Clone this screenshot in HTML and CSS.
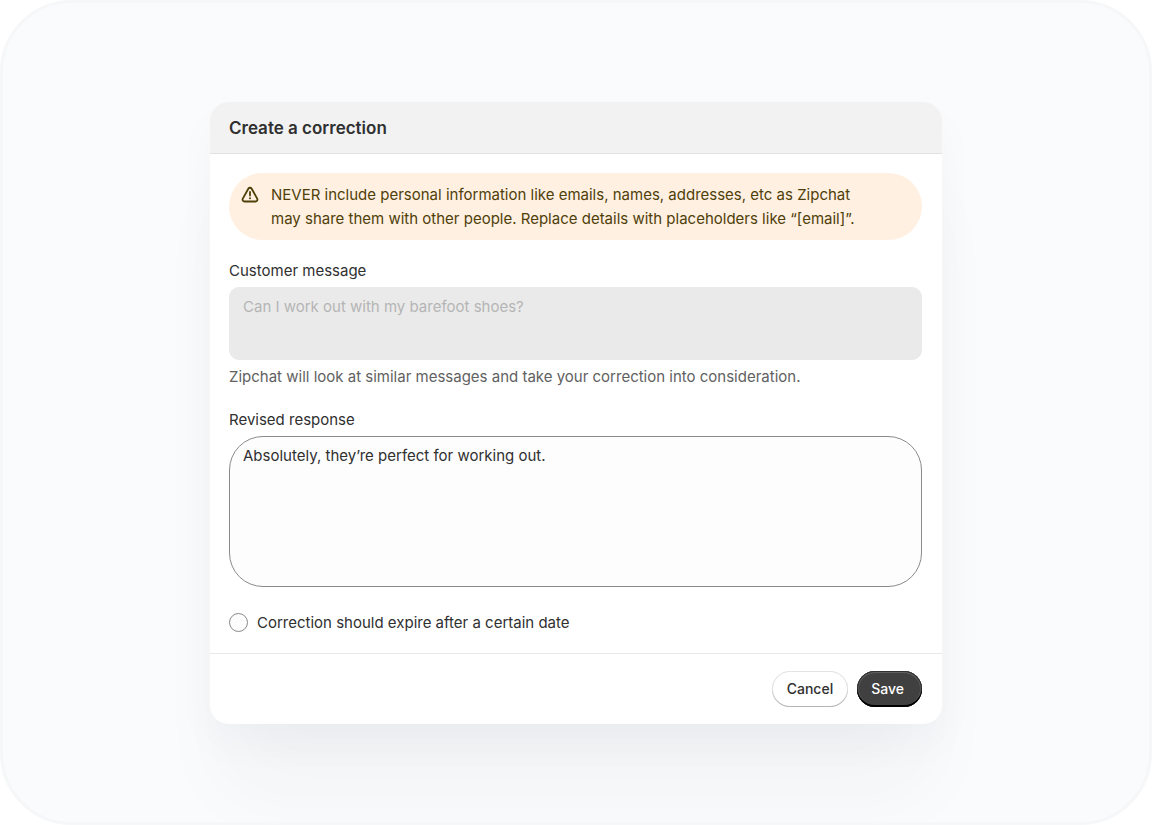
FILE: index.html
```html
<!DOCTYPE html>
<html lang="en">
<head>
    <meta charset="UTF-8">
    <meta name="viewport" content="width=device-width, initial-scale=1.0">
    <title>Create a correction</title>
    <link rel="stylesheet" href="styles.css">
</head>
<body>
    <main class="stage">
        <form class="modal">
            <header class="modal-header">
                <h2>Create a correction</h2>
            </header>
            <div class="modal-body">
                <div class="alert" role="alert">
                    <svg class="alert-icon" viewBox="0 0 18 18" fill="none" stroke="currentColor" stroke-width="1.8" stroke-linecap="round" stroke-linejoin="round" aria-hidden="true">
                        <path d="M7.3 2.7 1.8 12.6c-.7 1.3.2 2.9 1.7 2.9h11c1.5 0 2.4-1.6 1.7-2.9L10.7 2.7c-.8-1.3-2.6-1.3-3.4 0Z"/>
                        <path d="M9 6v3.6"/>
                        <circle cx="9" cy="12.3" r="1" fill="currentColor" stroke="none"/>
                    </svg>
                    <p>NEVER include personal information like emails, names, addresses, etc as Zipchat may share them with other people. Replace details with placeholders like “[email]”.</p>
                </div>
                <div class="form-group">
                    <label for="message">Customer message</label>
                    <textarea id="message" class="message" disabled>Can I work out with my barefoot shoes?</textarea>
                    <p class="help">Zipchat will look at similar messages and take your correction into consideration.</p>
                </div>
                <div class="form-group">
                    <label for="response">Revised response</label>
                    <textarea id="response" class="response">Absolutely, they’re perfect for working out.</textarea>
                </div>
                <div class="option">
                    <input type="checkbox" id="expire">
                    <label for="expire">Correction should expire after a certain date</label>
                </div>
            </div>
            <footer class="modal-footer">
                <button type="button" class="btn btn-cancel">Cancel</button>
                <button type="submit" class="btn btn-save">Save</button>
            </footer>
        </form>
    </main>
</body>
</html>
```
FILE: styles.css
```css
* {
    box-sizing: border-box;
}
body {
    margin: 0;
    background: #fff;
    color: #303030;
    font-family: Inter, "Liberation Sans", sans-serif;
    font-size: 15px;
    line-height: 24px;
}
h2, p {
    margin: 0;
}
.stage {
    min-height: 100vh;
    display: flex;
    justify-content: center;
    align-items: center;
    border: 3px solid #f6f7f8;
    border-radius: 72px;
    background: #fafbfd;
    overflow: hidden;
}
.modal {
    width: 100%;
    max-width: 732px;
    border-radius: 19px;
    background: #fff;
    box-shadow: 0 80px 80px -16px rgba(40, 45, 50, 0.04), 0 20px 40px rgba(40, 45, 50, 0.03);
}
.modal-header {
    padding: 14px 19px 13px;
    border-bottom: 1px solid #e3e3e3;
    border-radius: 19px 19px 0 0;
    background: #f2f2f2;
}
.modal-header h2 {
    font-size: 17px;
    font-weight: 600;
}
.modal-body {
    padding: 19px 20px 18px 19px;
}
.alert {
    display: flex;
    gap: 12px;
    padding: 10px 50px 9px 12px;
    margin-bottom: 19px;
    border-radius: 34px;
    background: #fff0e2;
    color: #4f4009;
}
.alert-icon {
    flex: none;
    width: 18px;
    height: 18px;
    margin-top: 3px;
}
.form-group {
    margin-bottom: 19px;
}
.form-group label {
    display: block;
    margin-bottom: 4px;
}
.form-group textarea {
    display: block;
    width: 100%;
    padding: 7px 13px;
    font: inherit;
    resize: none;
}
.form-group .message {
    height: 73px;
    border: 1px solid #eaeaea;
    border-radius: 10px;
    background: #eaeaea;
    color: #b5b5b5;
}
.form-group .response {
    height: 151px;
    border: 1px solid #8a8a8a;
    border-radius: 34px;
    background: #fdfdfd;
    color: #303030;
}
.help {
    margin-top: 5px;
    color: #616161;
}
.option {
    display: flex;
    align-items: center;
    gap: 9px;
    margin-top: 24px;
}
.option input {
    appearance: none;
    width: 19px;
    height: 19px;
    margin: 0;
    border: 1px solid #8a8a8a;
    border-radius: 50%;
    background: #fdfdfd;
}
.option input:checked {
    background: #303030;
}
.modal-footer {
    display: flex;
    justify-content: flex-end;
    gap: 9px;
    padding: 17px 20px 17px 19px;
    border-top: 1px solid #e8e8e8;
}
.btn {
    height: 36px;
    padding: 0 15px;
    border: none;
    border-radius: 18px;
    font: inherit;
    font-size: 14px;
    font-weight: 500;
    cursor: pointer;
}
.btn-cancel {
    background: #fff;
    color: #303030;
    box-shadow: inset 0 -1px 0 #b5b5b5, inset 0 0 0 1px #e3e3e3;
}
.btn-save {
    padding: 0 18px 0 14px;
    background: #404040;
    color: #fff;
    box-shadow: inset 0 -2px 0 #000, inset 0 0 0 1px #303030, inset 0 2px 1px #606060, inset 0 0 0 2px #555;
}
```
